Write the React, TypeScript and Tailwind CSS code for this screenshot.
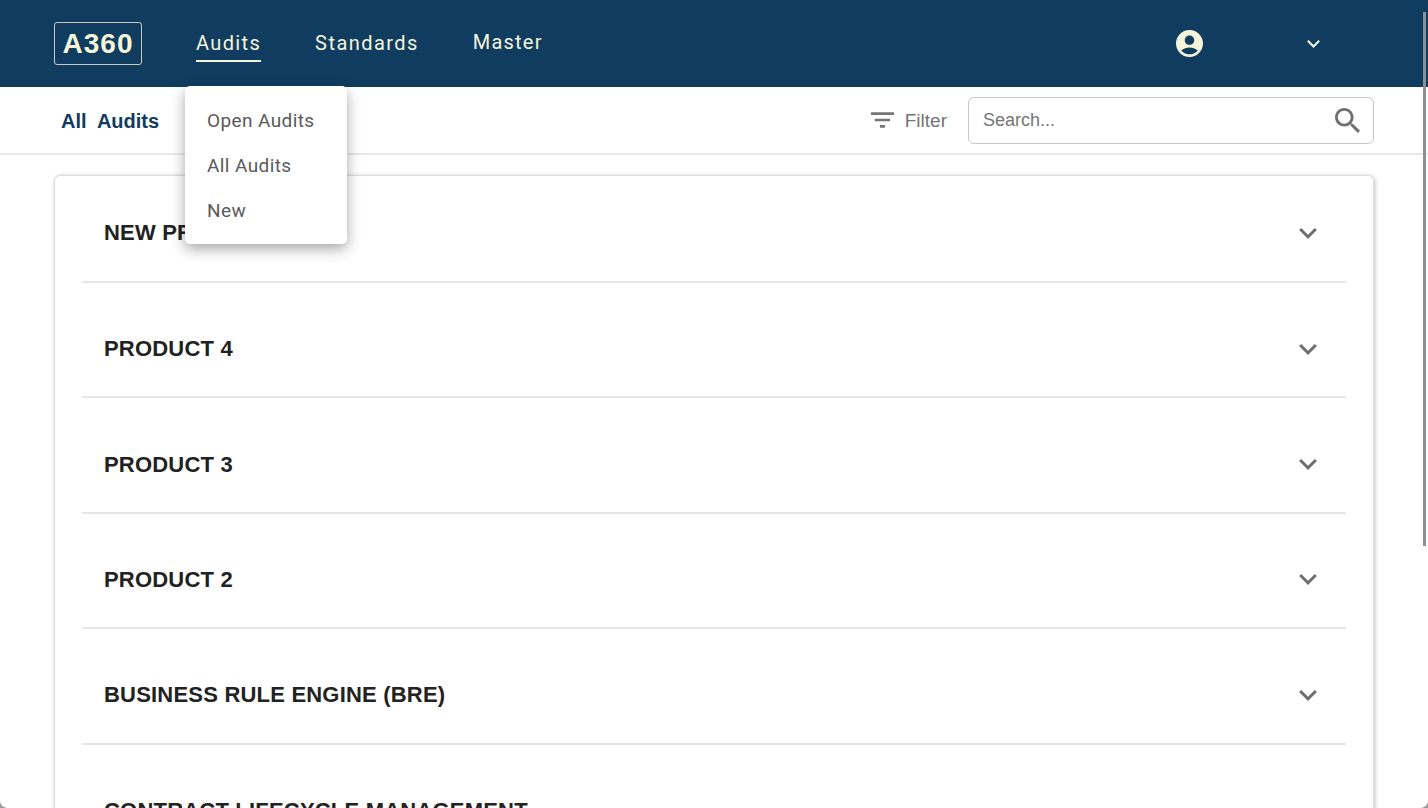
const products = [
  "NEW PRODUCT",
  "PRODUCT 4",
  "PRODUCT 3",
  "PRODUCT 2",
  "BUSINESS RULE ENGINE (BRE)",
  "CONTRACT LIFECYCLE MANAGEMENT",
];

function UserIcon() {
  return (
    <svg viewBox="2 2 20 20" className="w-[27px] h-[27px] fill-[#f5f5dc]">
      <path d="M12 2C6.48 2 2 6.48 2 12s4.48 10 10 10 10-4.48 10-10S17.52 2 12 2zm0 4c1.93 0 3.5 1.57 3.5 3.5S13.93 13 12 13s-3.5-1.57-3.5-3.5S10.07 6 12 6zm0 14c-2.03 0-4.43-.82-6.14-2.88C7.55 15.8 9.68 15 12 15s4.45.8 6.14 2.12C16.43 19.18 14.03 20 12 20z" />
    </svg>
  );
}

function FilterIcon() {
  return (
    <svg viewBox="3 6 18 12" className="w-[23px] h-[16px] fill-[#757575]">
      <path d="M10 18h4v-2h-4v2zM3 6v2h18V6H3zm3 7h12v-2H6v2z" />
    </svg>
  );
}

function SearchIcon() {
  return (
    <svg viewBox="3 3 17.5 17.5" className="ml-auto w-[25px] h-[25px] fill-[#707070]">
      <path d="M15.5 14h-.79l-.28-.27C15.41 12.59 16 11.11 16 9.5 16 5.91 13.09 3 9.5 3S3 5.91 3 9.5 5.91 16 9.5 16c1.61 0 3.09-.59 4.23-1.57l.27.28v.79l5 4.99L20.49 19l-4.99-5zm-6 0C7.01 14 5 11.99 5 9.5S7.01 5 9.5 5 14 7.01 14 9.5 11.99 14 9.5 14z" />
    </svg>
  );
}

function Chevron({ className }: { className: string }) {
  return (
    <svg viewBox="6 8.59 12 7.41" className={className}>
      <path d="M16.59 8.59L12 13.17 7.41 8.59 6 10l6 6 6-6z" />
    </svg>
  );
}

export default function App() {
  return (
    <div className="relative h-screen overflow-hidden bg-white font-['Roboto',sans-serif]">
      {/* top nav */}
      <header className="h-[87px] bg-[#0f3c5f] flex items-center pl-[54px] pr-[108px] text-[#f5f5dc]">
        <div className="w-[88px] h-[43px] border border-[#c9ccb8] rounded-[3px] flex items-center justify-center font-['Liberation_Sans',sans-serif] font-bold text-[28px] tracking-[1px]">
          A360
        </div>
        <nav className="flex items-center gap-[54px] ml-[54px] text-[20px]">
          <a className="border-b-2 border-[#f5f5dc] pt-[5px] pb-[3px] leading-[27px] tracking-[1.35px]">Audits</a>
          <a className="leading-[27px] tracking-[1.45px]">Standards</a>
          <a className="pb-[2px] leading-[27px] tracking-[1.2px]">Master</a>
        </nav>
        <div className="ml-auto flex items-center gap-[104px]">
          <UserIcon />
          <Chevron className="w-[13px] h-[8px] fill-[#f5f5dc]" />
        </div>
      </header>

      {/* sub header */}
      <div className="h-[68px] border-b-2 border-[#e8e8e8] flex items-center pl-[61px] pr-[54px]">
        <div className="font-['Liberation_Sans',sans-serif] font-bold text-[20px] text-[#0f3c5f] whitespace-pre pt-[2px]">All  Audits</div>
        <div className="ml-auto flex items-center text-[#757575] font-['Liberation_Sans',sans-serif]">
          <FilterIcon />
          <span className="ml-[11px] text-[19px] pt-[2px]">Filter</span>
          <div className="ml-[21px] w-[406px] h-[47px] border border-[#c8c8c8] rounded-[6px] flex items-center pl-[14px] pr-[13px]">
            <span className="text-[18px] pt-[1px]">Search...</span>
            <SearchIcon />
          </div>
        </div>
      </div>

      {/* product list */}
      <div className="mx-[54px] mt-[20px] border border-[#dcdcdc] rounded-[6px] shadow-[1px_1px_4px_rgba(0,0,0,0.25)] px-[27px]">
        {products.map((name, i) => (
          <div
            key={name}
            className={`flex items-center justify-between border-b-2 border-[#e6e6e6] pl-[22px] pr-[29px] ${i === 0 ? "h-[107px] pt-[8px]" : "h-[115.4px] pt-[18px]"}`}
          >
            <span className="font-['Liberation_Sans',sans-serif] font-bold text-[22px] tracking-[0.2px] text-[#222222]">{name}</span>
            {i < products.length - 1 && <Chevron className="w-[18px] h-[11px] fill-[#6e6e6e] mt-[1px]" />}
          </div>
        ))}
      </div>

      {/* audits menu */}
      <div className="absolute left-[185px] top-[86px] w-[162px] h-[158px] bg-white rounded-[5px] shadow-[0_5px_14px_rgba(0,0,0,0.35)] pt-[13px] text-[19px] tracking-[0.4px] text-[#5a5a5a]">
        <div className="h-[45px] pl-[22px] flex items-center">Open Audits</div>
        <div className="h-[45px] pl-[22px] flex items-center">All Audits</div>
        <div className="h-[45px] pl-[22px] flex items-center">New</div>
      </div>

      {/* scrollbar */}
      <div className="absolute left-[1423px] top-[12px] w-[3px] h-[534px] bg-[#8a8f94]" />

      {/* window corners */}
      <svg viewBox="0 0 8 8" className="absolute left-0 bottom-0 w-[8px] h-[8px] fill-[#9a9a9a]">
        <path d="M0 0C0 4 2 7 7 8H0z" />
      </svg>
      <svg viewBox="0 0 8 8" className="absolute right-0 bottom-0 w-[8px] h-[8px] fill-[#9a9a9a]">
        <path d="M8 0C8 4 6 7 1 8H8z" />
      </svg>
    </div>
  );
}
